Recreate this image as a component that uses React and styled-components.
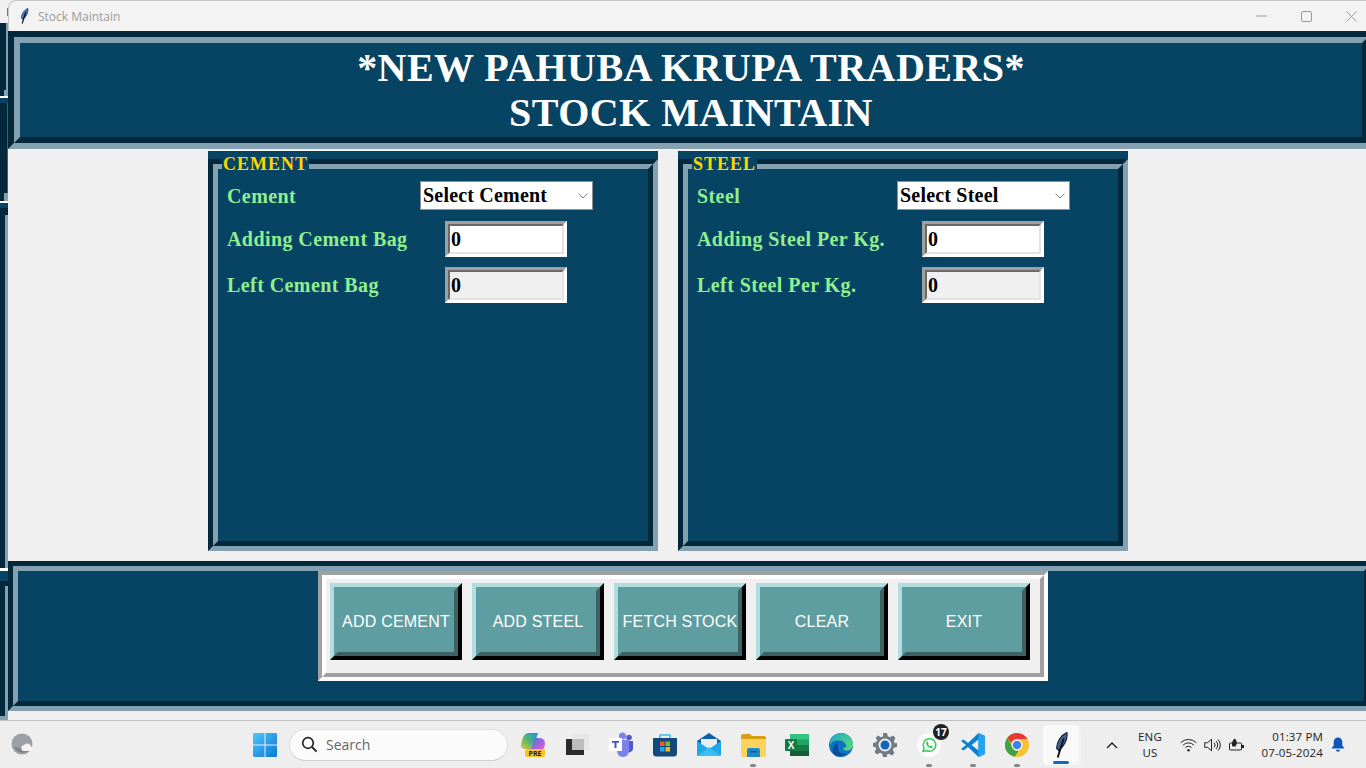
import React from 'react';
import styled, { createGlobalStyle } from 'styled-components';

const NAVY = '#074463';
const NAVY_DARK = '#04283b';
const NAVY_LIGHT = '#83a1b1';

const GlobalStyle = createGlobalStyle`
  html, body {
    margin: 0;
    padding: 0;
    background: #f0f0f0;
  }
  * { box-sizing: border-box; }
`;

const Screen = styled.div`
  width: 1366px;
  height: 768px;
  overflow: hidden;
  display: flex;
  flex-direction: column;
  background: #f0f0f0;
`;

const Desktop = styled.div`
  flex: none;
  height: 720px;
  display: flex;
`;

const BackWindows = styled.div`
  flex: none;
  width: 8px;
  display: flex;
  flex-direction: column;
`;

const BackSlice = styled.div`
  flex: none;
  height: ${p => p.$h}px;
  background: ${p => p.$c};
  border-right: ${p => p.$ew || 2}px solid ${p => p.$edge || p.$c};
`;

const Window = styled.div`
  flex: none;
  width: 1366px;
  display: flex;
  flex-direction: column;
  background: #f0f0f0;
`;

const TitleBar = styled.div`
  flex: none;
  height: 31px;
  display: flex;
  align-items: center;
  background: #f3f3f3;
  border-top: 1px solid #c4c4c4;
  border-left: 1px solid #c4c4c4;
  border-top-left-radius: 8px;
  padding-left: 11px;
`;

const WindowTitle = styled.span`
  font: 12px "Open Sans", sans-serif;
  color: #9b9b9b;
  margin-left: 9px;
  white-space: nowrap;
`;

const WindowControls = styled.div`
  display: flex;
  margin-left: auto;
`;

const ControlSlot = styled.div`
  width: 45px;
  height: 30px;
  display: flex;
  align-items: center;
  justify-content: center;
`;

/* two nested borders give the Tk ridge look */
const RidgeOuter = styled.div`
  flex: none;
  height: ${p => p.$h};
  border-style: solid;
  border-width: ${p => p.$w}px;
  border-color: ${NAVY_DARK} ${NAVY_LIGHT} ${NAVY_LIGHT} ${NAVY_DARK};
`;

const RidgeInner = styled.div`
  height: 100%;
  background: ${NAVY};
  border-style: solid;
  border-width: ${p => p.$w}px;
  border-color: ${NAVY_LIGHT} ${NAVY_DARK} ${NAVY_DARK} ${NAVY_LIGHT};
`;

const HeaderText = styled.h1`
  margin: 0;
  padding-top: 2px;
  text-align: center;
  font: bold 40px/45px "Liberation Serif", serif;
  letter-spacing: 0.45px;
  color: #fff;
`;

const Middle = styled.div`
  flex: none;
  height: 412px;
  display: flex;
  gap: 20px;
  padding: 2px 0 0 200px;
`;

const Group = styled.section`
  position: relative;
  flex: none;
  width: 450px;
  height: 400px;
  padding-top: 8px;
  background: ${NAVY};
`;

const GroupTitle = styled.div`
  position: absolute;
  top: 0;
  left: 14px;
  height: 18px;
  padding: 4px 1px 0;
  background: ${NAVY};
  font: bold 18px/18px "Liberation Serif", serif;
  letter-spacing: 1px;
  color: #ffd700;
`;

const GroupBody = styled.div`
  height: 100%;
  padding: 12px 0 0 9px;
  display: flex;
  flex-direction: column;
`;

const Row = styled.div`
  display: flex;
  align-items: center;
  margin-bottom: ${p => p.$mb}px;
`;

const FieldLabel = styled.label`
  flex: none;
  width: ${p => p.$w}px;
  font: bold 20px/24px "Liberation Serif", serif;
  letter-spacing: 0.42px;
  color: #90ee90;
`;

const SelectBox = styled.div`
  flex: none;
  width: 173px;
  height: 29px;
  display: flex;
  align-items: center;
  justify-content: space-between;
  padding: 0 4px 0 2px;
  background: #fff;
  border: 1px solid #8f8f8f;
  font: bold 20px "Liberation Serif", serif;
  letter-spacing: 0.2px;
  color: #000;
`;

const EntryOuter = styled.div`
  flex: none;
  width: 122px;
  height: 36px;
  border-style: solid;
  border-width: 3px;
  border-color: #a0a0a0 #fff #fff #a0a0a0;
`;

const EntryField = styled.input`
  display: block;
  width: 100%;
  height: 100%;
  margin: 0;
  padding: 0 0 0 1px;
  outline: none;
  border-style: solid;
  border-width: 2px;
  border-color: #696969 #e3e3e3 #e3e3e3 #696969;
  border-radius: 0;
  background: ${p => (p.$readonly ? '#f0f0f0' : '#fff')};
  font: bold 20px "Liberation Serif", serif;
  color: #000;
`;

const ButtonGroove = styled.div`
  width: 730px;
  height: 110px;
  margin-left: 300px;
  border-style: solid;
  border-width: 4px;
  border-color: #a0a0a0 #fff #fff #a0a0a0;
`;

const ButtonTray = styled.div`
  height: 100%;
  display: flex;
  gap: 10px;
  padding: 4px;
  background: #f0f0f0;
  border-style: solid;
  border-width: 4px;
  border-color: #fff #a0a0a0 #a0a0a0 #fff;
`;

const ActionButton = styled.button`
  flex: none;
  width: 132px;
  height: 77px;
  padding: 0;
  border-style: solid;
  border-width: 4px;
  border-color: #afdde0 #000 #000 #afdde0;
  border-radius: 0;
  background: #5f9ea0;
`;

const ActionFace = styled.span`
  display: flex;
  height: 100%;
  align-items: center;
  justify-content: center;
  white-space: nowrap;
  border-style: solid;
  border-width: 4px;
  border-color: #5f9ea0 #3d6264 #3d6264 #5f9ea0;
  font: 16px "Liberation Sans", sans-serif;
  letter-spacing: 0.2px;
  color: #fff;
`;

const Taskbar = styled.footer`
  flex: none;
  height: 48px;
  display: flex;
  align-items: center;
  background: #eeeeee;
  border-top: 1px solid #c2c2c2;
`;

const WeatherSlot = styled.div`
  flex: none;
  width: 253px;
  padding-left: 11px;
  display: flex;
`;

const TaskIcon = styled.div`
  flex: none;
  position: relative;
  width: 44px;
  height: 44px;
  display: flex;
  align-items: center;
  justify-content: center;

  ${p => p.$active && `
    &::before {
      content: '';
      position: absolute;
      top: 2px;
      bottom: 2px;
      left: 6px;
      right: 2px;
      border-radius: 4px;
      background: #f3f3f3;
    }
    &::after {
      content: '';
      position: absolute;
      top: 2px;
      bottom: 2px;
      left: 4px;
      right: 5px;
      border-radius: 4px;
      background: #f9f9f9;
    }
    & > * { z-index: 1; }
  `}
`;

const RunningDot = styled.span`
  position: absolute;
  bottom: ${p => (p.$active ? 3 : 0)}px;
  left: 50%;
  margin-left: ${p => (p.$active ? -8 : -3)}px;
  width: ${p => (p.$active ? 16 : 6)}px;
  height: 3px;
  border-radius: 2px;
  background: ${p => (p.$active ? '#0a6cc8' : '#858585')};
`;

const CountBadge = styled.span`
  position: absolute;
  top: 1px;
  right: 2px;
  width: 16px;
  height: 16px;
  border-radius: 50%;
  background: #222226;
  color: #fff;
  font: bold 10px/16px "Open Sans", sans-serif;
  text-align: center;
`;

const SearchPill = styled.div`
  flex: none;
  width: 219px;
  height: 32px;
  margin-right: 3px;
  display: flex;
  align-items: center;
  gap: 8px;
  padding-left: 11px;
  border: 1px solid #dedede;
  border-bottom-color: #cfcfcf;
  border-radius: 16px;
  background: #fbfbfb;
  font: 14px "Open Sans", sans-serif;
  color: #666;
`;

const StartSlot = styled.div`
  flex: none;
  width: 36px;
  display: flex;
`;

const TaskIcons = styled.div`
  flex: none;
  display: flex;
  align-items: center;
`;

const Tray = styled.div`
  flex: none;
  margin-left: 21px;
  display: flex;
  align-items: center;
`;

const TrayText = styled.div`
  flex: none;
  width: ${p => p.$w}px;
  margin-left: ${p => p.$ml || 0}px;
  text-align: ${p => p.$align};
  font: 11.5px/16px "Open Sans", sans-serif;
  letter-spacing: 0.15px;
  color: #222;
`;

const TraySlot = styled.div`
  flex: none;
  width: ${p => p.$w}px;
  margin-left: ${p => p.$ml || 0}px;
  display: flex;
  justify-content: center;
`;

const Feather = ({ w = 9, h = 16, fill = '#3f7fd0' }) => (
  <svg width={w} height={h} viewBox="0 0 12 24">
    <path d="M11 0.600C5.500 3 1.500 9 1.500 15L3.500 17.200C8 13.500 12 7 11 0.600z" fill={fill} stroke="#16233a" strokeWidth="1.100" />
    <path d="M8 6L2.500 23.500" stroke="#0b0b0b" strokeWidth="1.700" fill="none" />
  </svg>
);

const Chevron = () => (
  <svg width="10" height="6" viewBox="0 0 10 6">
    <path d="M0.500 0.700L5 5L9.500 0.700" fill="none" stroke="#7a7a7a" strokeWidth="1" />
  </svg>
);

const StartLogo = () => (
  <svg width="24" height="24" viewBox="0 0 24 24">
    <defs>
      <linearGradient id="winA" x1="0" y1="0" x2="1" y2="1">
        <stop offset="0" stopColor="#4fc6fb" />
        <stop offset="1" stopColor="#0a78d6" />
      </linearGradient>
    </defs>
    <path d="M0 1.200Q0 0 1.200 0H11.500V11.500H0zM12.500 0H22.800Q24 0 24 1.200V11.500H12.500zM0 12.500H11.500V24H1.200Q0 24 0 22.800zM12.500 12.500H24V22.800Q24 24 22.800 24H12.500z" fill="url(#winA)" />
  </svg>
);

const Weather = () => (
  <svg width="24" height="24" viewBox="0 0 24 24">
    <circle cx="11" cy="11" r="10.500" fill="#9aa0a6" />
    <path d="M3 14a10 10 0 0 0 16 3z" fill="#7d8388" />
    <path d="M12 18a3.200 3.200 0 0 1 1-6 4 4 0 0 1 7 1.400 2.400 2.400 0 0 1 0 4.600z" fill="#f4f4f4" />
  </svg>
);

const SearchGlyph = () => (
  <svg width="17" height="17" viewBox="0 0 17 17">
    <circle cx="7" cy="7" r="5.300" fill="none" stroke="#222" strokeWidth="1.700" />
    <path d="M11 11L15.600 15.600" stroke="#222" strokeWidth="1.900" />
  </svg>
);

const Copilot = () => (
  <svg width="26" height="26" viewBox="0 0 26 26">
    <defs>
      <linearGradient id="copA" x1="0" y1="1" x2="1" y2="0">
        <stop offset="0" stopColor="#f0c43a" />
        <stop offset="0.450" stopColor="#56b96c" />
        <stop offset="1" stopColor="#1f8fe0" />
      </linearGradient>
      <linearGradient id="copB" x1="0" y1="0" x2="1" y2="1">
        <stop offset="0" stopColor="#3f7fe0" />
        <stop offset="0.600" stopColor="#b55fd8" />
        <stop offset="1" stopColor="#ee6a9e" />
      </linearGradient>
    </defs>
    <path d="M9 1h9l-5 16H5Q0 17 1 12l1.500-5Q4 1 9 1z" fill="url(#copA)" />
    <path d="M14 6h5q6 0 6 5.500 0 7.500-8 7.500h-6z" fill="url(#copB)" />
    <rect x="5" y="17" width="20" height="8" rx="2" fill="#f7c325" />
    <text x="15" y="23.500" textAnchor="middle" fontFamily="Open Sans, sans-serif" fontWeight="700" fontSize="7" fill="#1c1c1c">PRE</text>
  </svg>
);

const TaskView = () => (
  <svg width="24" height="24" viewBox="0 0 24 24">
    <rect x="1" y="6" width="18" height="16" fill="#2b2b2b" />
    <rect x="7" y="1" width="17" height="16" rx="1" fill="#e6e6e6" />
    <rect x="7" y="6" width="12" height="11" fill="#bdbdbd" />
  </svg>
);

const Teams = () => (
  <svg width="26" height="26" viewBox="0 0 26 26">
    <circle cx="21" cy="5.500" r="2.800" fill="#5059c9" />
    <circle cx="14.500" cy="4" r="3.500" fill="#7b83eb" />
    <path d="M18 9h7v8a4 4 0 0 1-7 2z" fill="#5059c9" />
    <path d="M9 8h12v11a6 6 0 0 1-12 0z" fill="#7b83eb" />
    <rect x="1" y="6" width="13" height="13" fill="#fff" />
    <path d="M4 9h7v1.800H8.500V16H6.500V10.800H4z" fill="#4b53bc" />
  </svg>
);

const Store = () => (
  <svg width="24" height="24" viewBox="0 0 24 24">
    <path d="M7 5V2h10v3" fill="none" stroke="#3cc0ea" strokeWidth="1.500" />
    <path d="M0 5h24v15a3.500 3.500 0 0 1-3.500 3.500h-17A3.500 3.500 0 0 1 0 20z" fill="#14497c" />
    <rect x="7" y="8.500" width="4.500" height="4.500" fill="#ef5a30" />
    <rect x="12.500" y="8.500" width="4.500" height="4.500" fill="#7fba2a" />
    <rect x="7" y="14" width="4.500" height="4.500" fill="#20a4ea" />
    <rect x="12.500" y="14" width="4.500" height="4.500" fill="#fdb913" />
  </svg>
);

const Mail = () => (
  <svg width="24" height="24" viewBox="0 0 24 24">
    <path d="M12 0L24 8v3H0V8z" fill="#0f5fae" />
    <path d="M4 6h16v7H4z" fill="#e9eef4" />
    <path d="M0 8l12 8 12-8v14a1 1 0 0 1-1 1H1a1 1 0 0 1-1-1z" fill="#1da7ea" />
    <path d="M0 23l12-9 12 9z" fill="#39bdf2" />
  </svg>
);

const Explorer = () => (
  <svg width="25" height="24" viewBox="0 0 25 24">
    <path d="M0 3q0-2 2-2h7l2 2h12q2 0 2 2v2H0z" fill="#d99f14" />
    <path d="M0 6h25v16q0 2-2 2H2q-2 0-2-2z" fill="#fcd45b" />
    <path d="M6 17q0-2 2-2h9q2 0 2 2v7H6z" fill="#1e88c9" />
    <rect x="9" y="18" width="7" height="1.500" fill="#0e5a92" />
  </svg>
);

const Excel = () => (
  <svg width="24" height="24" viewBox="0 0 24 24">
    <rect x="5" y="1" width="19" height="22" rx="1" fill="#21a366" />
    <rect x="5" y="1" width="19" height="5.500" fill="#33c481" />
    <rect x="5" y="12" width="19" height="5.500" fill="#107c41" />
    <rect x="5" y="17.500" width="19" height="5.500" fill="#185c37" />
    <rect x="0" y="6" width="12" height="12" rx="1" fill="#107c41" />
    <text x="6" y="15.500" textAnchor="middle" fontFamily="Liberation Sans, sans-serif" fontWeight="700" fontSize="10" fill="#fff">X</text>
  </svg>
);

const Edge = () => (
  <svg width="24" height="24" viewBox="0 0 24 24">
    <defs>
      <linearGradient id="edgeA" x1="0" y1="0" x2="1" y2="1">
        <stop offset="0" stopColor="#1faac8" />
        <stop offset="1" stopColor="#5fdc73" />
      </linearGradient>
    </defs>
    <circle cx="12" cy="12" r="12" fill="#0f71c4" />
    <path d="M1 9C3 2 9 0 12 0c7 0 12 5 12 11.500 0 4-3 6-6 6-2 0-4-.6-4-2.500 3 0 4-1.500 3-3.500C15 8 11 6.500 7 7.500 4.500 8 2.500 9 1 12z" fill="url(#edgeA)" />
    <path d="M9 15c0 4 3 6.500 8 5.500-3 3.500-8 4-11.500 1.500C2 19 4 11 9 10z" fill="#0a4f95" />
  </svg>
);

const Gear = () => (
  <svg width="24" height="24" viewBox="0 0 24 24">
    <path d="M10 0h4l.8 3.200 2.300 1L20 2.500 22.500 5l-1.700 2.900 1 2.300L24 10v4l-3.200.8-1 2.300 1.700 2.900-2.500 2.500-2.900-1.700-2.300 1L14 24h-4l-.8-3.200-2.300-1L4 21.500 1.500 19l1.700-2.900-1-2.300L0 14v-4l3.200-.8 1-2.300L2.500 5 5 2.500l2.900 1.700 2.300-1z" fill="#6f7a85" />
    <circle cx="12" cy="12" r="6.500" fill="#eeeeee" />
    <circle cx="12" cy="12" r="4.500" fill="#1764b8" />
  </svg>
);

const WhatsApp = () => (
  <svg width="24" height="24" viewBox="0 0 24 24">
    <circle cx="12" cy="12" r="12" fill="#fbfbfb" />
    <path d="M6 18.500l1-3.500a6.300 6.300 0 1 1 2.500 2.500z" fill="none" stroke="#35c95a" strokeWidth="1.500" />
    <path d="M9.500 9c1-1.500 1.500 0 2 1.200l-.6.900c.5 1 1.200 1.600 2.200 2.100l.9-.7c1.200.5 2.200 1 1.400 1.900-2.500 2.300-7.500-2.500-5.900-5.400z" fill="#35c95a" />
  </svg>
);

const VsCode = () => (
  <svg width="24" height="24" viewBox="0 0 24 24">
    <path d="M17.500 0L24 3v18l-6.500 3L7 14l-4.500 3.500L0 16l5-4-5-4 2.500-1.500L7 10z" fill="#0a80d2" />
    <path d="M17.500 6.500L10.500 12l7 5.500z" fill="#eeeeee" />
    <path d="M17.500 0L24 3v18l-6.500 3z" fill="#27a3ee" />
  </svg>
);

const Chrome = () => (
  <svg width="24" height="24" viewBox="0 0 24 24">
    <circle cx="12" cy="12" r="12" fill="#fbc02d" />
    <path d="M12 0a12 12 0 0 1 10.400 6H12a6 6 0 0 0-5.700 4L2.300 4.800A12 12 0 0 1 12 0z" fill="#e53935" />
    <path d="M2.300 4.800L7 13a6 6 0 0 0 6.500 4.800L9.800 23.800A12 12 0 0 1 2.300 4.800z" fill="#43a047" />
    <circle cx="12" cy="12" r="5.500" fill="#fff" />
    <circle cx="12" cy="12" r="4.300" fill="#3f82ee" />
  </svg>
);

const Wifi = () => (
  <svg width="17" height="14" viewBox="0 0 17 14">
    <g fill="none" stroke="#222" strokeWidth="1">
      <path d="M0.700 4.700a11 11 0 0 1 15.600 0" />
      <path d="M3 7.200a7.700 7.700 0 0 1 11 0" />
      <path d="M5.400 9.600a4.400 4.400 0 0 1 6.200 0" />
    </g>
    <circle cx="8.500" cy="12.200" r="1.200" fill="#222" />
  </svg>
);

const Speaker = () => (
  <svg width="17" height="14" viewBox="0 0 17 14">
    <g fill="none" stroke="#222" strokeWidth="1">
      <path d="M0.700 4.700h2.800L7.500 1.200v11.600L3.500 9.300H0.700z" />
      <path d="M10 4.600a3.400 3.400 0 0 1 0 4.800" />
      <path d="M12 3a5.600 5.600 0 0 1 0 8" />
      <path d="M14 1.400a8 8 0 0 1 0 11.200" />
    </g>
  </svg>
);

const Battery = () => (
  <svg width="17" height="14" viewBox="0 0 17 14">
    <rect x="1.500" y="5" width="12" height="7" rx="1" fill="none" stroke="#222" strokeWidth="1" />
    <rect x="14" y="7" width="2" height="3" fill="#222" />
    <path d="M6.500 0.500C9 2.500 9.500 5 7.500 8.500H4.500C3 6 4.500 2.500 6.500 0.500z" fill="#222" />
  </svg>
);

const BellIcon = () => (
  <svg width="14" height="15" viewBox="0 0 14 15">
    <path d="M7 0.500a4.300 4.300 0 0 1 4.300 4.300V8.500L13.500 11.500H0.500L2.700 8.500V4.800A4.300 4.300 0 0 1 7 0.500z" fill="#0b56b8" />
    <path d="M5 12.700h4a2 2 0 0 1-4 0z" fill="#0b56b8" />
  </svg>
);

const apps = [
  { id: 'copilot', icon: <Copilot /> },
  { id: 'taskview', icon: <TaskView /> },
  { id: 'teams', icon: <Teams /> },
  { id: 'store', icon: <Store /> },
  { id: 'mail', icon: <Mail /> },
  { id: 'explorer', icon: <Explorer />, running: true },
  { id: 'excel', icon: <Excel /> },
  { id: 'edge', icon: <Edge /> },
  { id: 'settings', icon: <Gear /> },
  { id: 'whatsapp', icon: <WhatsApp />, running: true, badge: '17' },
  { id: 'vscode', icon: <VsCode />, running: true },
  { id: 'chrome', icon: <Chrome />, running: true },
  { id: 'tk', icon: <Feather w={13} h={26} fill="#41618f" />, active: true },
];

const buttons = ['ADD CEMENT', 'ADD STEEL', 'FETCH STOCK', 'CLEAR', 'EXIT'];

// the strip of other windows showing left of this one
const backSlices = [
  { h: 8, c: '#f0f0f0' },
  { h: 8, c: '#f0f0f0', edge: '#777', ew: 1 },
  { h: 7, c: '#f0f0f0' },
  { h: 67, c: NAVY_DARK, edge: NAVY_LIGHT },
  { h: 6, c: NAVY_DARK, edge: NAVY_LIGHT, ew: 4 },
  { h: 2, c: '#ffffff' },
  { h: 5, c: NAVY },
  { h: 90, c: NAVY_DARK, edge: '#3f5f70', ew: 1 },
  { h: 8, c: NAVY_DARK, edge: NAVY_LIGHT, ew: 4 },
  { h: 2, c: '#ffffff' },
  { h: 5, c: NAVY },
  { h: 7, c: NAVY_DARK },
  { h: 353, c: NAVY_DARK, edge: NAVY_LIGHT, ew: 3 },
  { h: 3, c: '#ffffff' },
  { h: 10, c: NAVY },
  { h: 5, c: NAVY_DARK },
  { h: 130, c: NAVY_DARK, edge: NAVY_LIGHT, ew: 3 },
  { h: 4, c: NAVY_LIGHT },
];

const StockGroup = ({ title, selectText, name, addLabel, leftLabel, selectOffset, entryOffset }) => (
  <Group>
    <GroupTitle>{title}</GroupTitle>
    <RidgeOuter $w={5} $h="100%">
      <RidgeInner $w={5}>
        <GroupBody>
          <Row $mb={11}>
            <FieldLabel $w={selectOffset}>{name}</FieldLabel>
            <SelectBox>
              {selectText}
              <Chevron />
            </SelectBox>
          </Row>
          <Row $mb={10}>
            <FieldLabel $w={entryOffset}>{addLabel}</FieldLabel>
            <EntryOuter>
              <EntryField defaultValue="0" />
            </EntryOuter>
          </Row>
          <Row $mb={0}>
            <FieldLabel $w={entryOffset}>{leftLabel}</FieldLabel>
            <EntryOuter>
              <EntryField $readonly readOnly defaultValue="0" />
            </EntryOuter>
          </Row>
        </GroupBody>
      </RidgeInner>
    </RidgeOuter>
  </Group>
);

const App = () => (
  <Screen>
    <GlobalStyle />
    <Desktop>
      <BackWindows>
        {backSlices.map((s, i) => (
          <BackSlice key={i} $h={s.h} $c={s.c} $edge={s.edge} $ew={s.ew} />
        ))}
      </BackWindows>
      <Window>
        <TitleBar>
          <Feather />
          <WindowTitle>Stock Maintain</WindowTitle>
          <WindowControls>
            <ControlSlot>
              <svg width="11" height="2" viewBox="0 0 11 2"><path d="M0 1H11" stroke="#9b9b9b" /></svg>
            </ControlSlot>
            <ControlSlot>
              <svg width="11" height="11" viewBox="0 0 11 11"><rect x="0.500" y="0.500" width="10" height="10" rx="1.500" fill="none" stroke="#9b9b9b" /></svg>
            </ControlSlot>
            <ControlSlot>
              <svg width="11" height="11" viewBox="0 0 11 11"><path d="M0.500 0.500L10.500 10.500M10.500 0.500L0.500 10.500" stroke="#9b9b9b" /></svg>
            </ControlSlot>
          </WindowControls>
        </TitleBar>
        <RidgeOuter $w={6} $h="118px">
          <RidgeInner $w={6}>
            <HeaderText>
              *NEW PAHUBA KRUPA TRADERS*
              <br />
              STOCK MAINTAIN
            </HeaderText>
          </RidgeInner>
        </RidgeOuter>
        <Middle>
          <StockGroup
            title="CEMENT"
            name="Cement"
            selectText="Select Cement"
            addLabel="Adding Cement Bag"
            leftLabel="Left Cement Bag"
            selectOffset={193}
            entryOffset={218}
          />
          <StockGroup
            title="STEEL"
            name="Steel"
            selectText="Select Steel"
            addLabel="Adding Steel Per Kg."
            leftLabel="Left Steel Per Kg."
            selectOffset={200}
            entryOffset={225}
          />
        </Middle>
        <RidgeOuter $w={5} $h="150px">
          <RidgeInner $w={5}>
            <ButtonGroove>
              <ButtonTray>
                {buttons.map(label => (
                  <ActionButton key={label}>
                    <ActionFace>{label}</ActionFace>
                  </ActionButton>
                ))}
              </ButtonTray>
            </ButtonGroove>
          </RidgeInner>
        </RidgeOuter>
      </Window>
    </Desktop>
    <Taskbar>
      <WeatherSlot>
        <Weather />
      </WeatherSlot>
      <StartSlot>
        <StartLogo />
      </StartSlot>
      <SearchPill>
        <SearchGlyph />
        Search
      </SearchPill>
      <TaskIcons>
        {apps.map(app => (
          <TaskIcon key={app.id} $active={app.active}>
            {app.icon}
            {app.badge && <CountBadge>{app.badge}</CountBadge>}
            {(app.running || app.active) && <RunningDot $active={app.active} />}
          </TaskIcon>
        ))}
      </TaskIcons>
      <Tray>
        <TraySlot $w={16}>
          <svg width="12" height="8" viewBox="0 0 12 8"><path d="M1 7L6 2L11 7" fill="none" stroke="#222" strokeWidth="1.400" /></svg>
        </TraySlot>
        <TrayText $w={40} $ml={10} $align="center">ENG<br />US</TrayText>
        <TraySlot $w={24} $ml={6}><Wifi /></TraySlot>
        <TraySlot $w={24}><Speaker /></TraySlot>
        <TraySlot $w={24}><Battery /></TraySlot>
        <TrayText $w={75} $align="right">01:37 PM<br />07-05-2024</TrayText>
        <TraySlot $w={30}><BellIcon /></TraySlot>
      </Tray>
    </Taskbar>
  </Screen>
);

export default App;
